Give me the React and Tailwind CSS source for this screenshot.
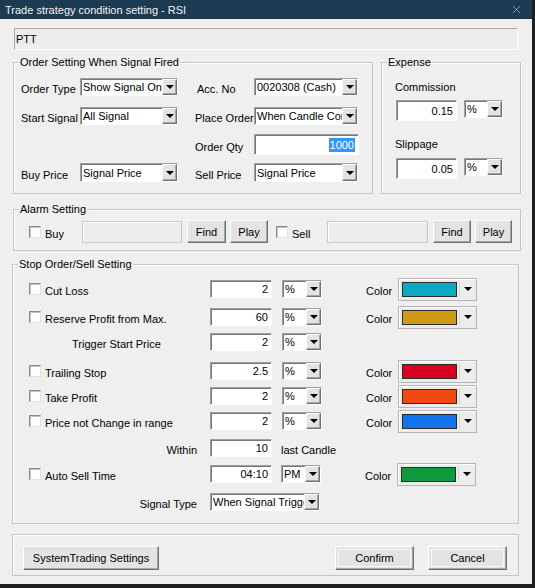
import { X } from 'lucide-react'

const raised = 'bg-[#e3e3e3] border border-t-white border-l-white border-r-[#707070] border-b-[#707070] shadow-[inset_-1px_-1px_0_#a6a6a6]'
const sunken = 'border border-t-[#a0a0a0] border-l-[#a0a0a0] border-r-white border-b-white shadow-[inset_1px_1px_0_#777777]'

function Arrow() {
  return <span className="w-0 h-0 border-l-[4px] border-r-[4px] border-t-[4px] border-l-transparent border-r-transparent border-t-black" />
}

function Group({ title, className = '', children }) {
  return (
    <fieldset className={`border border-[#c6c6c6] shadow-[inset_1px_1px_0_#ffffff] ${className}`}>
      {title && <legend className="ml-[5px] px-[1px] leading-[14px] bg-[#efefef]">{title}</legend>}
      {children}
    </fieldset>
  )
}

function Label({ className = '', children }) {
  return <span className={`pt-[4px] leading-[14px] whitespace-nowrap ${className}`}>{children}</span>
}

function Combo({ value, className = '' }) {
  return (
    <div className={`flex bg-white ${sunken} ${className}`}>
      <div className="flex-1 min-w-0 overflow-hidden whitespace-nowrap pl-[2px] leading-[14px] self-center">{value}</div>
      <div className={`w-[15px] flex items-center justify-center ${raised}`}><Arrow /></div>
    </div>
  )
}

function Edit({ value, className = '', children }) {
  return (
    <div className={`flex items-center justify-end pr-[3px] bg-white leading-[14px] ${sunken} ${className}`}>
      {children ?? value}
    </div>
  )
}

function Check({ className = '' }) {
  return <span className={`block w-[12px] h-[12px] shrink-0 bg-white border border-t-[#8a8a8a] border-l-[#8a8a8a] border-r-[#e2e2e2] border-b-[#e2e2e2] shadow-[inset_1px_1px_0_#c4c4c4] ${className}`} />
}

function Button({ className = '', children }) {
  return (
    <div className={`flex items-center justify-center leading-[14px] ${raised} ${className}`}>{children}</div>
  )
}

function ColorPick({ color }) {
  return (
    <div className="flex w-[79px] h-[23px] border border-[#b4b4b4] shadow-[inset_1px_1px_0_#ffffff] bg-[#ececec] py-[3px] pl-[3px]">
      <div className={`w-[55px] border border-[#2a2a2a] ${color}`} />
      <div className="flex-1 ml-[2px] flex items-center justify-center border-l border-[#d6d6d6]"><Arrow /></div>
    </div>
  )
}

function CheckLead({ label }) {
  return (
    <div className="w-[197px] flex items-center pl-[16px]">
      <Check />
      <Label className="ml-[4px] pt-[3px]">{label}</Label>
    </div>
  )
}

function StopRow({ className = '', lead, value, unit, color }) {
  return (
    <div className={`flex items-center h-[24px] ${className}`}>
      {lead}
      <Edit value={value} className="w-[62px] h-[18px]" />
      {unit}
      {color && (
        <>
          <Label className="ml-[44px] w-[32px] pt-[3px]">Color</Label>
          <ColorPick color={color} />
        </>
      )}
    </div>
  )
}

const pct = <Combo value="%" className="ml-[10px] w-[40px] h-[18px]" />

export default function App() {
  return (
    <div className="w-[535px] h-[588px] bg-[#1f1f1f] text-[11px] text-black font-['Liberation_Sans',Arial,sans-serif]">
      <div className="w-[532px] h-[584px] bg-[#efefef] flex flex-col">
        {/* title bar */}
        <div className="h-[19px] shrink-0 bg-[#1c3b53] text-[#f2f2f2] flex items-center justify-between pl-[5px] pr-[9px]">
          <span className="leading-[14px]">Trade strategy condition setting - RSI</span>
          <X size={13} strokeWidth={1.4} className="text-[#a9b8c6]" />
        </div>

        {/* symbol */}
        <div className="mt-[9px] ml-[14px] w-[504px] h-[22px] flex items-center pl-[1px] bg-[#ececec] border border-t-[#a8a8a8] border-l-[#a8a8a8] border-r-white border-b-white">
          PTT
        </div>

        <div className="flex mt-[5px] ml-[13px]">
          <Group title="Order Setting When Signal Fired" className="w-[360px] h-[139px]">
            <div className="flex items-center h-[18px] mt-[9px]">
              <Label className="ml-[7px] w-[59px]">Order Type</Label>
              <Combo value="Show Signal Only" className="w-[98px] h-[18px]" />
              <Label className="ml-[17px] w-[59px] pl-[2px]">Acc. No</Label>
              <Combo value="0020308 (Cash)" className="w-[104px] h-[18px]" />
            </div>
            <div className="flex items-center h-[18px] mt-[11px]">
              <Label className="ml-[7px] w-[59px]">Start Signal</Label>
              <Combo value="All Signal" className="w-[98px] h-[18px]" />
              <Label className="ml-[17px] w-[59px]">Place Order</Label>
              <Combo value="When Candle Completed" className="w-[104px] h-[18px]" />
            </div>
            <div className="flex items-center h-[21px] mt-[9px]">
              <Label className="ml-[181px] w-[59px]">Order Qty</Label>
              <Edit className="w-[105px] h-[21px] pr-[1px]">
                <span className="bg-[#3297fd] text-white px-[1px]">1000</span>
              </Edit>
            </div>
            <div className="flex items-center h-[19px] mt-[8px]">
              <Label className="ml-[7px] w-[59px]">Buy Price</Label>
              <Combo value="Signal Price" className="w-[98px] h-[19px]" />
              <Label className="ml-[17px] w-[59px]">Sell Price</Label>
              <Combo value="Signal Price" className="w-[104px] h-[19px]" />
            </div>
          </Group>

          <Group title="Expense" className="ml-[8px] w-[140px] h-[139px]">
            <div className="ml-[13px] mt-[11px] leading-[14px]">Commission</div>
            <div className="flex items-start ml-[14px] mt-[6px]">
              <Edit value="0.15" className="w-[61px] h-[21px]" />
              <Combo value="%" className="ml-[7px] w-[39px] h-[18px]" />
            </div>
            <div className="ml-[13px] mt-[16px] leading-[14px]">Slippage</div>
            <div className="flex items-start ml-[14px] mt-[7px]">
              <Edit value="0.05" className="w-[61px] h-[21px]" />
              <Combo value="%" className="ml-[7px] w-[39px] h-[18px]" />
            </div>
          </Group>
        </div>

        <Group title="Alarm Setting" className="ml-[13px] mt-[8px] w-[508px] h-[49px]">
          <div className="flex items-center h-[23px] mt-[4px]">
            <Check className="ml-[15px]" />
            <Label className="ml-[4px] w-[37px] pt-[3px]">Buy</Label>
            <div className="w-[100px] h-[22px] bg-[#ececec] border border-[#c9c9c9] shadow-[inset_1px_1px_0_#ffffff]" />
            <Button className="ml-[5px] w-[39px] h-[23px]">Find</Button>
            <Button className="ml-[4px] w-[38px] h-[23px]">Play</Button>
            <Check className="ml-[8px]" />
            <Label className="ml-[4px] w-[35px] pt-[3px]">Sell</Label>
            <div className="w-[101px] h-[22px] bg-[#ececec] border border-[#c9c9c9] shadow-[inset_1px_1px_0_#ffffff]" />
            <Button className="ml-[5px] w-[38px] h-[23px]">Find</Button>
            <Button className="ml-[4px] w-[37px] h-[23px]">Play</Button>
          </div>
        </Group>

        <Group title="Stop Order/Sell Setting" className="ml-[12px] mt-[6px] w-[507px] h-[267px]">
          <StopRow className="mt-[6px]" lead={<CheckLead label="Cut Loss" />} value="2" unit={pct} color="bg-[#0bacc2]" />
          <StopRow className="mt-[4px]" lead={<CheckLead label="Reserve Profit from Max." />} value="60" unit={pct} color="bg-[#d09b14]" />
          <StopRow
            className="mt-[1px]"
            lead={<div className="w-[197px] pl-[59px] flex"><Label className="pt-[3px]">Trigger Start Price</Label></div>}
            value="2"
            unit={pct}
          />
          <StopRow className="mt-[5px]" lead={<CheckLead label="Trailing Stop" />} value="2.5" unit={pct} color="bg-[#da0021]" />
          <StopRow className="mt-[1px]" lead={<CheckLead label="Take Profit" />} value="2" unit={pct} color="bg-[#f04913]" />
          <StopRow className="mt-[1px]" lead={<CheckLead label="Price not Change in range" />} value="2" unit={pct} color="bg-[#1174ee]" />
          <StopRow
            className="mt-[3px]"
            lead={<div className="w-[197px] pr-[13px] flex justify-end"><Label className="pt-[3px]">Within</Label></div>}
            value="10"
            unit={<Label className="ml-[9px] pt-[3px]">last Candle</Label>}
          />
          <StopRow
            className="mt-[2px]"
            lead={<CheckLead label="Auto Sell Time" />}
            value="04:10"
            unit={<Combo value="PM" className="ml-[9px] w-[40px] h-[18px]" />}
            color="bg-[#0f9a3d]"
          />
          <div className="flex items-center h-[24px] mt-[4px]">
            <div className="w-[197px] pr-[13px] flex justify-end"><Label className="pt-[3px]">Signal Type</Label></div>
            <Combo value="When Signal Triggered" className="w-[110px] h-[18px]" />
          </div>
        </Group>

        <Group className="ml-[12px] mt-[10px] w-[507px] h-[42px]">
          <div className="flex items-start justify-between pt-[11px] pl-[10px] pr-[11px]">
            <Button className="w-[136px] h-[24px]">SystemTrading Settings</Button>
            <div className="flex gap-[14px]">
              <Button className="w-[79px] h-[24px] p-[2px]">
                <span className="w-full h-full flex items-center justify-center border border-[#f6f6f6]">Confirm</span>
              </Button>
              <Button className="w-[79px] h-[24px] p-[2px]">
                <span className="w-full h-full flex items-center justify-center border border-[#f6f6f6]">Cancel</span>
              </Button>
            </div>
          </div>
        </Group>
      </div>
    </div>
  )
}
